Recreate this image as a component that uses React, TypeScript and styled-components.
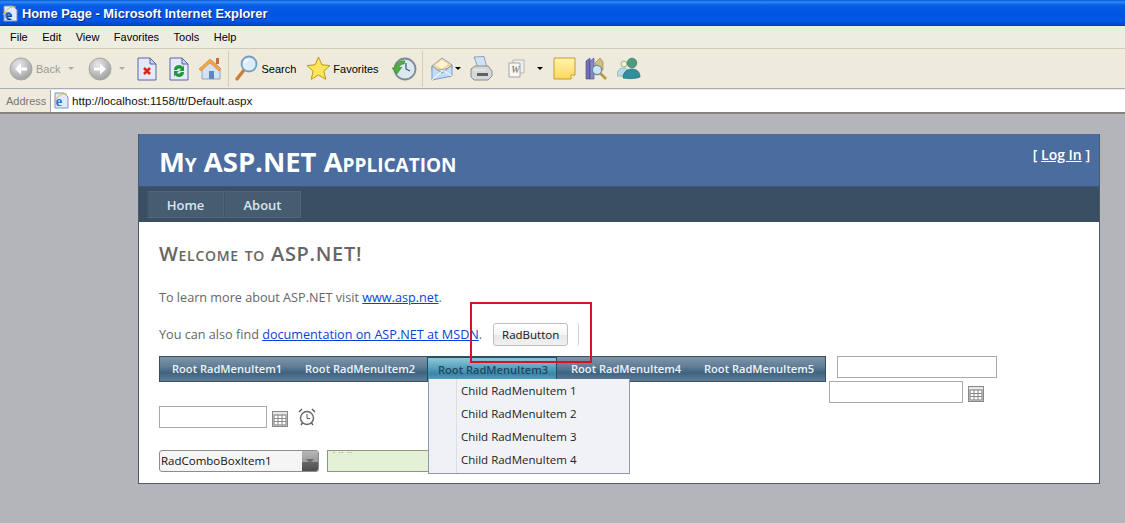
import React from 'react';
import styled, { createGlobalStyle } from 'styled-components';

const GlobalStyle = createGlobalStyle`
  html, body {
    margin: 0;
    padding: 0;
    height: 523px;
    overflow: hidden;
    background: #b4b5ba;
  }
  * {
    box-sizing: border-box;
  }
`;

const Shell = styled.div`
  width: 1125px;
  height: 523px;
  display: flex;
  flex-direction: column;
  overflow: hidden;
  font-family: 'Liberation Sans', Arial, sans-serif;
`;

const TitleBar = styled.div`
  height: 26px;
  display: flex;
  align-items: center;
  gap: 3px;
  padding: 0 0 0 2px;
  background: linear-gradient(to bottom, #0a5ad8 0, #2f8af5 2px, #0a5fe6 5px, #0054e3 14px, #0058e6 20px, #0046c8 25px, #003cb0 26px);
  color: #fff;
  font-size: 12.85px;
  font-weight: bold;
  text-shadow: 1px 1px 0 #0a2a80;
`;

const MenuBar = styled.div`
  height: 23px;
  display: flex;
  align-items: center;
  gap: 14.5px;
  padding: 0 0 0 10px;
  background: #eeede2;
  border-bottom: 1px solid #cfccbc;
  font-size: 11px;
  color: #000;
`;

const Toolbar = styled.div`
  height: 40px;
  display: flex;
  align-items: center;
  padding: 0 0 0 9px;
  background: #eeebdc;
  border-bottom: 1px solid #a9aeb4;
  font-size: 11px;
  color: #000;
`;

const ToolLabel = styled.span<{ $muted?: boolean; $gap?: number }>`
  color: ${p => (p.$muted ? '#9a9a94' : '#000')};
  margin-left: ${p => p.$gap ?? 2}px;
`;

const Caret = styled.span<{ $dark?: boolean; $left: number; $right: number }>`
  width: 0;
  height: 0;
  margin-left: ${p => p.$left}px;
  margin-right: ${p => p.$right}px;
  border-left: 3px solid transparent;
  border-right: 3px solid transparent;
  border-top: 3px solid ${p => (p.$dark ? '#000' : '#aaa')};
`;

const ToolSep = styled.span<{ $left: number; $right: number }>`
  width: 1px;
  height: 36px;
  margin-left: ${p => p.$left}px;
  margin-right: ${p => p.$right}px;
  background: #cfccbc;
`;

const ToolIcon = styled.svg<{ $left?: number }>`
  flex: none;
  margin-left: ${p => p.$left ?? 0}px;
`;

const AddressBar = styled.div`
  height: 23px;
  display: flex;
  align-items: center;
  padding: 0 0 0 6px;
  background: #eeebdc;
  font-size: 11px;
`;

const AddressLabel = styled.span`
  color: #777;
  width: 44px;
`;

const AddressField = styled.div`
  flex: 1;
  height: 22px;
  display: flex;
  align-items: center;
  gap: 2px;
  padding-left: 2px;
  background: #fff;
  border-left: 1px solid #9aa4b0;
  color: #111;
  font-size: 11.6px;
`;

const PageArea = styled.div`
  flex: 1;
  padding: 20px 25px 0 138px;
  background: #b4b5ba;
  border-top: 2px solid #84847c;
`;

const Page = styled.div`
  height: 350px;
  display: flex;
  flex-direction: column;
  border: 1px solid #4b5a66;
  border-top-width: 0;
  background: #fff;
  font-family: 'Open Sans', 'Noto Sans', sans-serif;
`;

const Banner = styled.header`
  height: 52px;
  display: flex;
  justify-content: space-between;
  padding: 0 9px 0 20px;
  background: #4b6c9e;
  color: #fff;
`;

const AppTitle = styled.h1`
  margin: 0;
  padding-top: 10px;
  font-size: 27.45px;
  line-height: 36px;
  font-weight: 700;
  font-variant: small-caps;
  white-space: nowrap;
`;

const LoginBox = styled.div`
  padding-top: 11px;
  font-size: 14px;
  line-height: 20px;
  font-weight: 600;
  & a {
    color: #fff;
    text-decoration: underline;
  }
`;

const NavBar = styled.nav`
  height: 36px;
  display: flex;
  padding: 4px 0 0 8px;
  background: #3a4f63;
  border-top: 1px solid #3f566c;
`;

const NavItem = styled.a`
  height: 27px;
  display: flex;
  align-items: center;
  justify-content: center;
  width: 77px;
  background: #465c71;
  border: 1px solid #4f6579;
  border-left-color: #3f5468;
  color: #dde4ec;
  font-size: 13px;
  font-weight: 600;
`;

const Main = styled.main`
  flex: 1;
  position: relative;
  padding: 0 0 0 20px;
  color: #666;
  font-size: 12.65px;
`;

const Welcome = styled.h2`
  margin: 0;
  padding-top: 19px;
  height: 53px;
  font-size: 20px;
  line-height: 26px;
  font-weight: 600;
  font-variant: small-caps;
  letter-spacing: 0.7px;
  color: #666;
`;

const Para = styled.p`
  margin: 11px 0 0;
  height: 22px;
  line-height: 22px;
  white-space: nowrap;
  & a {
    color: #0a3fd8;
    text-decoration: underline;
  }
`;

const FindRow = styled(Para)`
  margin-top: 15px;
  display: flex;
  align-items: center;
`;

const SplitButton = styled.div`
  width: 86px;
  height: 23px;
  margin-left: 11px;
  display: flex;
  border-right: 1px solid #d2d2d2;
  border-radius: 3px;
`;

const RadButton = styled.button`
  width: 75px;
  height: 23px;
  padding: 0;
  border: 1px solid #bdbdbd;
  border-radius: 3px;
  background: linear-gradient(to bottom, #fff 0, #f6f6f6 50%, #e8e8e8 51%, #f1f1f1 100%);
  color: #111;
  font-family: inherit;
  font-size: 11.5px;
`;

const MenuRow = styled.div`
  margin-top: 11px;
  height: 25px;
  display: flex;
  align-items: flex-start;
`;

const RadMenu = styled.div`
  width: 667px;
  height: 26px;
  display: flex;
  flex: none;
  border: 1px solid #3b4c5c;
  background: linear-gradient(to bottom, #7f95a8 0, #5f7d96 40%, #3f6480 65%, #5d7d99 100%);
`;

const RootItem = styled.div<{ $active?: boolean }>`
  width: 133px;
  height: 24px;
  line-height: 23px;
  padding-left: ${p => (p.$active ? 10 : 12)}px;
  color: ${p => (p.$active ? '#25445f' : '#eef3f8')};
  font-size: 11.1px;
  font-weight: 600;
  white-space: nowrap;
  ${p =>
    p.$active
      ? `
    width: 130px;
    margin: 0 2px 0 1px;
    border: 1px solid #1d4f66;
    border-bottom: none;
    background: linear-gradient(to bottom, #8fc8d6 0, #4e9ab8 50%, #3a86a8 70%, #5aaac8 100%);
  `
      : ''}
`;

const Input = styled.div<{ $w: number; $tint?: boolean }>`
  flex: none;
  width: ${p => p.$w}px;
  height: 22px;
  border: 1px solid #a9a9a9;
  background: ${p => (p.$tint ? '#e5f1d6' : '#fff')};
`;

const WideInput = styled(Input)`
  margin-left: 11px;
`;

const PickerRow = styled.div`
  margin: 0 0 0 670px;
  height: 22px;
  display: flex;
  align-items: center;
  gap: 5px;
`;

const DateRow = styled.div`
  margin-top: 3px;
  height: 22px;
  display: flex;
  align-items: center;
  gap: 5px;
`;

const ComboRow = styled.div`
  margin-top: 22px;
  display: flex;
  gap: 8px;
`;

const Combo = styled.div`
  width: 160px;
  height: 22px;
  display: flex;
  border: 1px solid #8d8d8d;
  border-radius: 3px;
  overflow: hidden;
  background: #f5f5f5;
`;

const ComboText = styled.div`
  flex: 1;
  padding-left: 1px;
  line-height: 20px;
  font-size: 11.5px;
  color: #111;
`;

const ComboArrow = styled.div`
  width: 16px;
  display: flex;
  align-items: center;
  justify-content: center;
  background: linear-gradient(to bottom, #b8b8b8 0, #9a9a9a 55%, #666 56%, #4e4e4e 100%);
  &::after {
    content: '';
    border-left: 4px solid transparent;
    border-right: 4px solid transparent;
    border-top: 4px solid #6a6a6a;
  }
`;

const MaskedInput = styled(Input)`
  border-color: #8a9a78;
  width: 102px;
  padding-left: 5px;
  font-size: 9px;
  line-height: 9px;
  color: #555;
  letter-spacing: 1px;
`;

/* the two floating bits over the form: the open submenu and the red mark-up box */
const DropDown = styled.div`
  position: absolute;
  left: 289px;
  top: 157px;
  width: 202px;
  height: 95px;
  display: flex;
  flex-direction: column;
  border: 1px solid #8a9aa8;
  border-top: none;
  background: linear-gradient(to right, #eef0f3 0, #eef0f3 27px, #dcdee2 27px, #dcdee2 28px, #f1f2f5 28px);
`;

const ChildItem = styled.div`
  height: 23px;
  line-height: 23px;
  padding-left: 32px;
  color: #222;
  font-size: 11.5px;
  white-space: nowrap;
`;

const RedBox = styled.div`
  position: absolute;
  left: 331px;
  top: 80px;
  width: 122px;
  height: 61px;
  border: 2px solid #d8131f;
`;

const CalendarSvg = styled.svg`
  flex: none;
  margin-top: 3px;
`;

const Calendar = () => (
  <CalendarSvg width="16" height="16" viewBox="0 0 16 16">
    <rect x="0.5" y="0.5" width="15" height="15" fill="#e8e8e8" stroke="#888" />
    <rect x="2" y="4" width="12" height="10" fill="#fff" stroke="#777" />
    <path d="M6 4v10M10 4v10M2 7.5h12M2 10.5h12" stroke="#888" />
  </CalendarSvg>
);

const Clock = () => (
  <ToolIcon width="18" height="18" viewBox="0 0 18 18" $left={5}>
    <circle cx="9" cy="10" r="6.5" fill="#fff" stroke="#666" strokeWidth="1.4" />
    <path d="M9 6v4.5h3" fill="none" stroke="#555" />
    <path d="M1 4l3-3M17 4l-3-3M3 17l1.5-2M15 17l-1.5-2" stroke="#555" strokeWidth="1.3" />
  </ToolIcon>
);

const IePage = () => (
  <svg width="17" height="17" viewBox="0 0 17 17">
    <path d="M2 1h9l4 4v11H2z" fill="#dfeafb" stroke="#7f96bb" />
    <text x="2.5" y="14" fontSize="15" fontWeight="bold" fontFamily="Liberation Serif, serif" fill="#2a78d0">e</text>
    <path d="M1 10c3-6 8-9 13-8" fill="none" stroke="#f0b040" strokeWidth="1" />
  </svg>
);

const BackIcon = ({ flip }: { flip?: boolean }) => (
  <ToolIcon width="24" height="24" viewBox="0 0 24 24">
    <defs>
      <radialGradient id="grayBall" cx="40%" cy="30%" r="75%">
        <stop offset="0" stopColor="#e8e8e8" />
        <stop offset="1" stopColor="#9c9c9c" />
      </radialGradient>
    </defs>
    <circle cx="12" cy="12" r="11" fill="url(#grayBall)" stroke="#a8a8a8" />
    <path
      d={flip ? 'M6 10.5h6V6.5l6 5.5-6 5.5v-4H6z' : 'M18 10.5h-6V6.5L6 12l6 5.5v-4h6z'}
      fill="#fff"
    />
  </ToolIcon>
);

const DocIcon = ({ children, left }: { children: React.ReactNode; left: number }) => (
  <ToolIcon width="20" height="24" viewBox="0 0 20 24" $left={left}>
    <path d="M1 1h12l6 6v16H1z" fill="#e4eafa" stroke="#5468a8" />
    <path d="M13 1v6h6z" fill="#c6d2ef" stroke="#5468a8" />
    {children}
  </ToolIcon>
);

const HomeIcon = () => (
  <ToolIcon width="25" height="25" viewBox="0 0 25 25" $left={9}>
    <path d="M4 12l9-8 9 8v11H4z" fill="#d5e2f3" stroke="#8fa4c0" />
    <path d="M1 13L12 3l11 10-2 2-9-8-9 8z" fill="#f4a54a" stroke="#d08030" strokeWidth="0.6" />
    <rect x="18" y="2" width="3" height="6" fill="#c96a3a" />
    <rect x="11" y="15" width="5" height="8" fill="#5d86c4" />
  </ToolIcon>
);

const SearchIcon = () => (
  <ToolIcon width="25" height="27" viewBox="0 0 25 27">
    <path d="M10 15L3 24" stroke="#c87f3a" strokeWidth="3.4" strokeLinecap="round" />
    <circle cx="15" cy="9" r="7.5" fill="#dcecfb" stroke="#7a9cc0" strokeWidth="1.8" />
    <path d="M10.5 8a5 5 0 0 1 4-3.5" fill="none" stroke="#fff" strokeWidth="1.4" />
  </ToolIcon>
);

const StarIcon = () => (
  <ToolIcon width="25" height="25" viewBox="0 0 25 25" $left={10}>
    <path d="M12.5 1l3.4 7.8 8.1.8-6.1 5.5 1.8 8.2-7.2-4.3-7.2 4.3 1.8-8.2L1 9.6l8.1-.8z" fill="#ffe45c" stroke="#b89a1e" />
  </ToolIcon>
);

const HistoryIcon = () => (
  <ToolIcon width="25" height="24" viewBox="0 0 25 24" $left={13}>
    <circle cx="13" cy="12" r="10.5" fill="#dde8ee" stroke="#7c8a94" strokeWidth="1.8" />
    <path d="M14 6v6l4 2" fill="none" stroke="#33556e" strokeWidth="1.2" />
    <path d="M3 11c1-5 5-8 10-7l-1 3c-3 0-5 2-5 4l3-1-5 7-5-6z" fill="#4cb13e" stroke="#2b7a24" strokeWidth="0.5" />
  </ToolIcon>
);

const MailIcon = () => (
  <ToolIcon width="22" height="24" viewBox="0 0 22 24">
    <path d="M1 9L11 1l10 7v3L1 14z" fill="#f9d78e" stroke="#8aa4cc" />
    <path d="M4 8l7-5 6 4-6 5z" fill="#fff2d6" />
    <path d="M1 9l10 7 10-8v11L1 23z" fill="#c4dcf6" stroke="#7c9ac6" />
    <path d="M1 23l9-8M21 19l-8-5" stroke="#fff" strokeWidth="1" />
  </ToolIcon>
);

const PrinterIcon = () => (
  <ToolIcon width="23" height="25" viewBox="0 0 23 25" $left={9}>
    <path d="M4 1l10-.5 3 11H8z" fill="#cfe2f5" stroke="#8fa2b4" />
    <path d="M1 13l4-3h13l4 5v5l-4 4H4l-3-3z" fill="#d6d7d7" stroke="#8a8c90" />
    <path d="M7 17h11v3H7z" fill="#5f6166" />
    <path d="M3 14h13" stroke="#f2f2f2" />
  </ToolIcon>
);

const WordIcon = () => (
  <ToolIcon width="17" height="19" viewBox="0 0 17 19" $left={15}>
    <path d="M5 1h11v13H5z" fill="#efefef" stroke="#b5b5b5" />
    <path d="M1 4h11v14H1z" fill="#f7f7f7" stroke="#a5a5a5" />
    <text x="3" y="14" fontSize="10" fontStyle="italic" fontWeight="bold" fontFamily="Liberation Serif, serif" fill="#8a8a8a">W</text>
  </ToolIcon>
);

const NoteIcon = () => (
  <ToolIcon width="23" height="23" viewBox="0 0 23 23" $left={10}>
    <defs>
      <linearGradient id="noteFill" x1="0" y1="0" x2="0" y2="1">
        <stop offset="0" stopColor="#fff3b0" />
        <stop offset="1" stopColor="#fdd85a" />
      </linearGradient>
    </defs>
    <path d="M1 1h21v17l-4 4H1z" fill="url(#noteFill)" stroke="#c79a2a" />
    <path d="M18 22v-4h4" fill="#fff" stroke="#c79a2a" />
  </ToolIcon>
);

const ResearchIcon = () => (
  <ToolIcon width="23" height="23" viewBox="0 0 23 23" $left={9}>
    <path d="M1 4l4-3v21H1z" fill="#6f6fb8" stroke="#484880" strokeWidth="0.6" />
    <path d="M5 4l4-3v21H5z" fill="#8888c8" stroke="#484880" strokeWidth="0.6" />
    <path d="M10 6l5-5 3 4v8h-8z" fill="#cfc080" stroke="#8a7a40" strokeWidth="0.6" />
    <path d="M15 16l6 6" stroke="#b89a3c" strokeWidth="2.6" />
    <circle cx="12" cy="13" r="4.6" fill="#cfe6f2" stroke="#6a8a9c" strokeWidth="1.2" />
  </ToolIcon>
);

const MessengerIcon = () => (
  <ToolIcon width="24" height="23" viewBox="0 0 24 23" $left={9}>
    <circle cx="7" cy="7" r="3" fill="#e6f0d8" stroke="#7ea05a" strokeWidth="0.7" />
    <path d="M0 19c0-6 3-8 7-8 3 0 4 2 4 8z" fill="#b8dbe8" stroke="#6fa0b4" strokeWidth="0.6" />
    <circle cx="15" cy="6" r="4.8" fill="#4e9c7c" stroke="#2b6e68" strokeWidth="0.6" />
    <path d="M6 21c0-6 4-9 9-9s8 3 8 8c-4 2-11 2-17 1z" fill="#2f8f9c" stroke="#25606c" strokeWidth="0.6" />
  </ToolIcon>
);

const rootItems = ['Root RadMenuItem1', 'Root RadMenuItem2', 'Root RadMenuItem3', 'Root RadMenuItem4', 'Root RadMenuItem5'];
const childItems = ['Child RadMenuItem 1', 'Child RadMenuItem 2', 'Child RadMenuItem 3', 'Child RadMenuItem 4'];

function App(): JSX.Element {
  return (
    <Shell>
      <GlobalStyle />
      <TitleBar>
        <IePage />
        Home Page - Microsoft Internet Explorer
      </TitleBar>
      <MenuBar>
        <span>File</span>
        <span>Edit</span>
        <span>View</span>
        <span>Favorites</span>
        <span>Tools</span>
        <span>Help</span>
      </MenuBar>
      <Toolbar>
        <BackIcon />
        <ToolLabel $muted $gap={3}>Back</ToolLabel>
        <Caret $left={8} $right={14} />
        <BackIcon flip />
        <Caret $left={7} $right={12} />
        <DocIcon left={0}>
          <path d="M7 11l6 6M13 11l-6 6" stroke="#d8281c" strokeWidth="2.6" />
        </DocIcon>
        <DocIcon left={12}>
          <path d="M5 13a5 5 0 0 1 9-3l1-2v6h-5l2-2a2.6 2.6 0 0 0-4 1z" fill="#1f9a3a" />
          <path d="M15 15a5 5 0 0 1-9 3l-1 2v-6h5l-2 2a2.6 2.6 0 0 0 4-1z" fill="#1f9a3a" />
        </DocIcon>
        <HomeIcon />
        <ToolSep $left={5} $right={5} />
        <SearchIcon />
        <ToolLabel>Search</ToolLabel>
        <StarIcon />
        <ToolLabel>Favorites</ToolLabel>
        <HistoryIcon />
        <ToolSep $left={5} $right={8} />
        <MailIcon />
        <Caret $dark $left={2} $right={0} />
        <PrinterIcon />
        <WordIcon />
        <Caret $dark $left={12} $right={0} />
        <NoteIcon />
        <ResearchIcon />
        <MessengerIcon />
      </Toolbar>
      <AddressBar>
        <AddressLabel>Address</AddressLabel>
        <AddressField>
          <IePage />
          http://localhost:1158/tt/Default.aspx
        </AddressField>
      </AddressBar>
      <PageArea>
        <Page>
          <Banner>
            <AppTitle>My ASP.NET Application</AppTitle>
            <LoginBox>
              [ <a href="#login">Log In</a> ]
            </LoginBox>
          </Banner>
          <NavBar>
            <NavItem>Home</NavItem>
            <NavItem>About</NavItem>
          </NavBar>
          <Main>
            <Welcome>Welcome to ASP.NET!</Welcome>
            <Para>
              To learn more about ASP.NET visit <a href="#asp">www.asp.net</a>.
            </Para>
            <FindRow>
              <span>
                You can also find <a href="#msdn">documentation on ASP.NET at MSDN</a>.
              </span>
              <SplitButton>
                <RadButton>RadButton</RadButton>
              </SplitButton>
            </FindRow>
            <MenuRow>
              <RadMenu>
                {rootItems.map((item, i) => (
                  <RootItem key={item} $active={i === 2}>
                    {item}
                  </RootItem>
                ))}
              </RadMenu>
              <WideInput $w={160} />
            </MenuRow>
            <PickerRow>
              <Input $w={134} />
              <Calendar />
            </PickerRow>
            <DateRow>
              <Input $w={108} />
              <Calendar />
              <Clock />
            </DateRow>
            <ComboRow>
              <Combo>
                <ComboText>RadComboBoxItem1</ComboText>
                <ComboArrow />
              </Combo>
              <MaskedInput $w={102} $tint>
                ˙ ˙˙ ˙˙
              </MaskedInput>
            </ComboRow>
            <DropDown>
              {childItems.map(item => (
                <ChildItem key={item}>{item}</ChildItem>
              ))}
            </DropDown>
            <RedBox />
          </Main>
        </Page>
      </PageArea>
    </Shell>
  );
}

export default App;
